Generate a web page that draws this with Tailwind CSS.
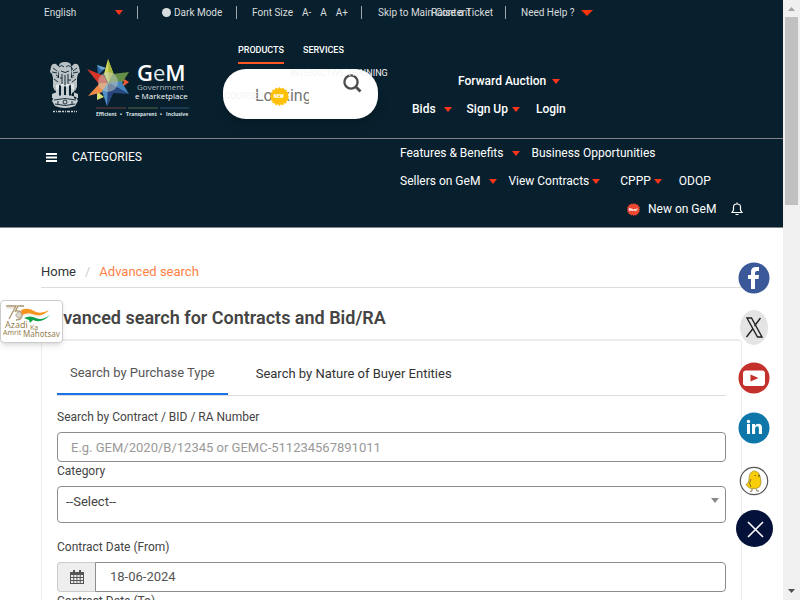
<!DOCTYPE html>
<html lang="en">
<head>
<meta charset="utf-8">
<meta name="viewport" content="width=device-width, initial-scale=1">
<title>Advanced search | GeM</title>
<script src="https://cdn.jsdelivr.net/npm/@tailwindcss/browser@4"></script>
</head>
<body class="flex h-screen overflow-hidden bg-white font-[Roboto,sans-serif] text-[#444]">
<svg class="hidden">
  <symbol id="caret" viewBox="0 0 8 5" preserveAspectRatio="none"><path d="M0 0h8L4 5z" fill="#f8341b"/></symbol>
  <symbol id="burst" viewBox="0 0 20 20"><path d="M10 0l1.700 1.900L14 .6l.9 2.300 2.500-.1.100 2.500 2.300.9-1 2.200L20 10l-1.300 1.600 1 2.300-2.300.9-.1 2.500-2.500-.1-.9 2.300-2.200-1.300L10 20l-1.700-1.800-2.300 1.200-.9-2.300-2.500.1-.1-2.500-2.200-.9 1-2.200L0 10l1.300-1.700-1-2.200 2.200-.9.100-2.500 2.500.1L6 .6l2.300 1.300z"/></symbol>
</svg>

<div class="relative min-w-0 flex-1 overflow-hidden">
  <header class="border-b border-[#808488] bg-[#08202d] text-white">
    <div class="flex h-[25px] items-center pl-11 text-[10px] text-[#d8dcde]">
      <div class="flex h-[13px] w-[94px] items-center border-r border-[#a0a6aa]">
        <select aria-label="Language" class="w-[71px] appearance-none bg-transparent text-[10px]"><option>English</option></select>
        <svg class="h-[5px] w-2"><use href="#caret"/></svg>
      </div>
      <button class="flex h-[13px] w-[99px] items-center gap-[3px] border-r border-[#a0a6aa] pl-6"><span class="size-[9px] rounded-full bg-[#d8dcde]"></span>Dark Mode</button>
      <div class="flex h-[13px] w-[125px] items-center gap-[9px] border-r border-[#a0a6aa] pl-[15px]">
        <span>Font Size</span><button>A-</button><button>A</button><button>A+</button>
      </div>
      <div class="relative flex h-[13px] w-36 items-center border-r border-[#a0a6aa] pl-4">
        <a href="#main">Skip to Main Content</a>
        <a href="#ticket" class="absolute right-3">Raise a Ticket</a>
      </div>
      <button class="flex items-center gap-[6px] pl-[15px]">Need Help ?<svg class="h-[6px] w-3" viewBox="0 0 12 6"><path d="M0 0h12L6 6z" fill="#f8340b"/></svg></button>
    </div>

    <div class="flex h-[114px] border-b border-[#808488] pl-12">
      <a href="#home" class="mt-[33px] block h-[62px] w-[142px]" aria-label="Government e Marketplace home">
        <svg viewBox="0 0 142 62" class="h-[62px] w-[142px]">
          <g fill="#e8ecee">
            <path d="M11 8q0-4 6-4t6 4l2 3-3 4h-10l-3-4zM3 9q1-4 5-3l3 3-1 10-5 1-1-4-2-2zM31 9q-1-4-5-3l-3 3 1 10 5 1 1-4 2-2zM11 14h12v13q-6 3-12 0zM5 18l6 2v10l-4 3-2-4zM29 18l-6 2v10l4 3 2-4z" opacity=".8"/>
            <path d="M8 27l3-1v14H8zM13 26h3v13h-3zM18 26h3v13h-3zM23 26h3v14h-3zM4 36l5-2 2 3-4 4-3-1zM30 36l-5-2-2 3 4 4 3-1zM6 39q11-4 22 0l2 4-3 5q-10 4-20 0l-3-5z" opacity=".85"/>
          </g>
          <g stroke="#08202d" fill="none" stroke-width=".9">
            <path d="M11 9q3-3 5 0M18 9q2-3 5 0M13 13q4 3 8 0M5 10l4 3M29 10l-4 3M4 14l5 1M30 14l-5 1M14 16v10M17 17v10M20 16v10M6 21l4 3M28 21l-4 3M12 20h2M20 22h3M8 17l3 2M26 17l-3 2M6 42q11-3 22 0M7 46q10 3 20 0M10 43v3M24 43v3"/>
            <circle cx="17" cy="44" r="2"/>
          </g>
          <path d="M5 53.500h24" stroke="#c8ced0" stroke-width="1.500" stroke-dasharray="2 1 1 1 3 1"/>
          <path d="M49 7l9 3-8 7z" fill="#2e6aa8"/><path d="M49 7l9 3-4 2z" fill="#74a9cf"/>
          <path d="M73 19l8 5-8 6 3-6z" fill="#e95a35"/><path d="M49 42v-9l7 6z" fill="#d9de74"/>
          <path d="M60 1l6 16-5 10-5-11z" fill="#d3d85b"/><path d="M60 1l6 16-5 10z" fill="#a9b83c"/>
          <path d="M81 14L65 16l-5 9 14 0z" fill="#648f45"/>
          <path d="M39 11l17 7 4 8-9 0z" fill="#d73529"/>
          <path d="M40 38l12-13 9 0-6 9z" fill="#f28a47"/>
          <path d="M59 48l-5-15 6-8 6 8z" fill="#5291c8"/><path d="M59 48l1-23 6 8z" fill="#27447c"/>
          <path d="M81 36L61 25l12-2z" fill="#4685bd"/><path d="M81 36l-15-1-5-10z" fill="#294b82"/>
          <circle cx="60" cy="24" r="10" fill="#c8d0c8" opacity=".5"/>
          <g font-family="Open Sans, Noto Sans, sans-serif" fill="#fff">
            <text x="89" y="23" font-size="22" font-weight="600">G<tspan font-weight="400" fill="#dfe5e8">e</tspan>M</text>
            <text x="89" y="32" font-size="8" fill="#aeb9bf">Government</text>
            <text x="87" y="41" font-size="8" font-weight="500">e Marketplace</text>
            <g font-size="5" font-weight="700" fill="#dce2e5"><text x="48" y="58">Efficient</text><text x="72" y="58">•</text><text x="78" y="58">Transparent</text><text x="112" y="58">•</text><text x="118" y="58">Inclusive</text></g>
          </g>
          <path d="M48 50h30" stroke="#6d403e"/><path d="M80 50h30" stroke="#536447"/><path d="M112 50h29" stroke="#2d5370"/>
        </svg>
      </a>

      <div class="relative ml-[33px] w-[155px] pt-[17px]">
        <nav class="flex gap-[19px] pl-[15px] text-[9px] leading-4 font-medium">
          <a href="#products" class="h-[22px] border-b-2 border-[#ff5722]">PRODUCTS</a>
          <a href="#services">SERVICES</a>
        </nav>
        <form class="mt-[5px] flex h-[50px] items-start rounded-[23px] bg-white pt-1 pl-8 shadow-lg">
          <input type="text" aria-label="Search" placeholder="Looking for products" class="mt-2 h-7 w-[54px] bg-transparent text-[16px] text-[#555] outline-none placeholder:text-[#757575]">
          <button type="button" aria-label="Search" class="ml-[33px]"><svg class="size-[20px]" viewBox="0 0 20 20" fill="none" stroke="#4d4d4d" stroke-width="2.300"><circle cx="9" cy="9" r="6.600"/><path d="M13.500 13.500l5 5" stroke-width="2.800"/></svg></button>
        </form>
        <a href="#training" class="absolute top-10 left-[67px] text-[9px] leading-4 whitespace-nowrap text-[#f5f5f5]">INTERACTIVE TRAINING</a>
        <a href="#courses" class="absolute top-[63px] left-px text-[9px] leading-4 text-[#f5f5f5]">COURSES</a>
        <svg class="absolute top-[62px] left-[47px] size-[19px]" viewBox="0 0 20 20"><use href="#burst" fill="#ffc107"/><text x="4" y="12" font-size="5" font-weight="900" fill="#fff" font-family="Roboto">NEW</text></svg>
      </div>

      <nav class="ml-[34px] pt-[42px] text-[12px] leading-7 font-medium">
        <div class="flex items-center pl-[46px]"><a href="#auction">Forward Auction</a><svg class="ml-[6px] h-[5px] w-2"><use href="#caret"/></svg></div>
        <div class="flex items-center">
          <a href="#bids">Bids</a><svg class="ml-2 h-[5px] w-2"><use href="#caret"/></svg>
          <a href="#signup" class="ml-[15px]">Sign Up</a><svg class="ml-[4px] h-[5px] w-2"><use href="#caret"/></svg>
          <a href="#login" class="ml-4">Login</a>
        </div>
      </nav>
    </div>

    <div class="flex h-[88px]">
      <button class="flex h-9 w-[354px] shrink-0 items-center gap-[15px] pl-[46px] text-[12px]">
        <svg class="h-[9px] w-[11px]" viewBox="0 0 11 9"><path d="M0 1h11M0 4.500h11M0 8h11" stroke="#fff" stroke-width="2"/></svg>CATEGORIES
      </button>
      <nav class="ml-[46px] text-[12px] leading-7">
        <div class="flex items-center"><a href="#features">Features &amp; Benefits</a><svg class="ml-[9px] h-[5px] w-2"><use href="#caret"/></svg><a href="#business" class="ml-[11px]">Business Opportunities</a></div>
        <div class="flex items-center"><a href="#sellers">Sellers on GeM</a><svg class="ml-[9px] h-[5px] w-2"><use href="#caret"/></svg><a href="#contracts" class="ml-[11px]">View Contracts</a><svg class="ml-[3px] h-[5px] w-2"><use href="#caret"/></svg><a href="#cppp" class="ml-5">CPPP</a><svg class="ml-[3px] h-[5px] w-2"><use href="#caret"/></svg><a href="#odop" class="ml-[17px]">ODOP</a></div>
        <div class="flex items-center pl-[227px]">
          <svg class="mr-2 size-[13px]" viewBox="0 0 20 20"><use href="#burst" fill="#ef4832"/><text x="3" y="13" font-size="6" font-weight="900" fill="#fff" font-family="Roboto">New!</text></svg>
          <a href="#new">New on GeM</a>
          <button aria-label="Notifications" class="ml-[15px]"><svg class="h-[14px] w-3" viewBox="0 0 12 14" fill="none" stroke="#fff" stroke-width="1.200"><path d="M1 10.500L2.500 8V5q0-3 3.500-3t3.500 3v3l1.500 2.500zM6 2V.5M4.500 12.500h3"/></svg></button>
        </div>
      </nav>
    </div>
  </header>

  <main id="main" class="pt-[34px] pr-[41px] pl-[41px]">
    <nav class="flex h-[26px] gap-[9px] border-b border-[#ddd] text-[13px] leading-5" aria-label="Breadcrumb">
      <a href="#home" class="text-[#333]">Home</a><span class="text-[#ccc]">/</span><a href="#search" class="text-[#ff7f45]">Advanced search</a>
    </nav>
    <h1 class="mt-[18px] h-[33px] text-[18px] leading-6 font-semibold">Advanced search for Contracts and Bid/RA</h1>
    <section class="rounded border border-t-2 border-[#ececec] px-[15px] pt-3">
      <div role="tablist" class="flex border-b border-[#ddd] text-[13px]">
        <button role="tab" aria-selected="true" class="h-[42px] border-b-2 border-[#1a73e8] px-[13px] text-[#555]">Search by Purchase Type</button>
        <button role="tab" aria-selected="false" class="ml-[15px] px-[13px] text-[#333]">Search by Nature of Buyer Entities</button>
      </div>
      <form class="flex flex-col text-[12px] leading-5">
        <label for="number" class="mt-[11px]">Search by Contract / BID / RA Number</label>
        <input id="number" placeholder="E.g. GEM/2020/B/12345 or GEMC-511234567891011" class="mt-[5px] h-[30px] rounded border border-[#8d8d8d] px-[13px] text-[13px] placeholder:text-[#999]">
        <label for="category" class="-mt-px">Category</label>
        <div class="relative mt-[5px] flex">
          <select id="category" class="h-[37px] flex-1 appearance-none rounded border border-[#8d8d8d] px-2 pb-[6px] text-[13px]"><option>--Select--</option></select>
          <svg class="pointer-events-none absolute top-3 right-[7px] h-[5px] w-2" viewBox="0 0 8 5"><path d="M0 0h8L4 5z" fill="#888"/></svg>
        </div>
        <label for="from" class="mt-[14px]">Contract Date (From)</label>
        <div class="mt-[5px] flex h-[30px]">
          <span class="flex w-[38px] items-center justify-center rounded-l border border-r-0 border-[#ccc] bg-[#eee]">
            <svg class="h-[14px] w-[14px]" viewBox="0 0 14 14"><path d="M0 2h3V0h2v2h4V0h2v2h3v12H0z" fill="#555"/><path d="M1 5h2.300v2H1zM4.200 5h2.300v2H4.200zM7.400 5h2.300v2H7.400zM10.700 5H13v2h-2.300zM1 8h2.300v2H1zM4.200 8h2.300v2H4.200zM7.400 8h2.300v2H7.400zM10.700 8H13v2h-2.300zM1 11h2.300v2H1zM4.200 11h2.300v2H4.200zM7.400 11h2.300v2H7.400zM10.700 11H13v2h-2.300z" fill="#eee"/></svg>
          </span>
          <input id="from" value="18-06-2024" class="min-w-0 flex-1 rounded-r border border-[#8d8d8d] px-[14px] text-[13px] text-[#555]">
        </div>
        <label for="to" class="-mt-px">Contract Date (To)</label>
        <input id="to" class="mt-[5px] h-[30px] rounded border border-[#8d8d8d]">
      </form>
    </section>
  </main>

  <a href="#azadi" aria-label="Azadi Ka Amrit Mahotsav" class="absolute top-[300px] left-0 block h-[43px] w-[63px] rounded border border-[#ccc] bg-white shadow-md">
    <svg viewBox="0 0 61 41" class="h-[41px] w-[61px]">
      <path d="M5 5h10L8 18M23 5h-6l-3 6M14 10q7-1 7 4t-6 5" fill="none" stroke="#aa9670" stroke-width="1.300"/>
      <path d="M6 7h8" stroke="#c7b89a" stroke-width=".7"/>
      <circle cx="18" cy="14" r="3" fill="#ddd6c8" stroke="#9c927f" stroke-dasharray="1 .6"/>
      <path d="M20 9q7-3 13 1t15-1q-6 7-14 5-7-3-13 0z" fill="#f7941d"/>
      <path d="M22 14q6-3 12 0t14-3q-6 6-14 5-6-2-12 0z" fill="#f2f2ee"/>
      <path d="M23 17q6-3 12 0t14-3q-6 7-14 6l-3-1-3 3-1-3z" fill="#0fa04b"/>
      <g fill="#96804f" font-family="Noto Sans, sans-serif"><text x="4" y="27" font-size="9">Azadi</text><text x="29" y="29" font-size="7">Ka</text><text x="2" y="34" font-size="7">Amrit</text><text x="22" y="36" font-size="8">Mahotsav</text></g>
    </svg>
  </a>

  <aside class="absolute top-[262px] right-[10px] flex w-[38px] flex-col items-center" aria-label="Social links">
    <a href="#facebook" aria-label="Facebook"><svg class="size-8" viewBox="0 0 32 32"><circle cx="16" cy="16" r="15.500" fill="#3b5998"/><path d="M13 27V17h-3v-4h3v-3q0-5 5-5h3v4h-2q-2 0-2 2v2h4l-.5 4H17v10z" fill="#fff"/></svg></a>
    <a href="#x" aria-label="X" class="mt-4"><svg class="h-[35px] w-7" viewBox="0 0 28 35"><ellipse cx="14" cy="17.500" rx="14" ry="17.500" fill="#e4e4e4"/><path d="M7 8h4.500L22 27h-4.500zM20.500 8l-6 8M13 18.500L6.500 27" fill="none" stroke="#222" stroke-width="1.400"/></svg></a>
    <a href="#youtube" aria-label="YouTube" class="mt-[17px]"><svg class="size-8" viewBox="0 0 32 32"><circle cx="16" cy="16" r="15.500" fill="#c4302b"/><rect x="5" y="8.500" width="22" height="15.500" rx="3" fill="#fff"/><path d="M12.500 12.500l8 3.500-8 3.500z" fill="#c4302b"/></svg></a>
    <a href="#linkedin" aria-label="LinkedIn" class="mt-[18px]"><svg class="size-8" viewBox="0 0 32 32"><circle cx="16" cy="16" r="15.500" fill="#0e76a8"/><g fill="#fff"><path d="M9 12h3v10H9zM14 12h3v1.500q1-1.800 3.300-1.800 3.700 0 3.700 4.300v6h-3.100v-5.500q0-2.200-1.700-2.200-2.100 0-2.100 2.400V22H14z"/><circle cx="10.500" cy="9.500" r="1.700"/></g></svg></a>
    <a href="#koo" aria-label="Koo" class="mt-[22px]"><svg class="size-[30px]" viewBox="0 0 30 30"><circle cx="15" cy="15" r="13.700" fill="#fff" stroke="#555" stroke-width="1.200"/><path d="M14 5.500q1-2 2 0 4 0 5 5l1 5q0 7-6 7-6 1-9-4 3-1 3-5 0-7 4-8z" fill="#facd09" stroke="#9a8424" stroke-width=".7"/><path d="M12 13q-3 5 0 8M15.500 9.500h1.500M19 9l2 .8-2 .7M13 23v2l-2 .5M17 23l1 2h2" fill="none" stroke="#675a22" stroke-width=".8"/></svg></a>
    <button aria-label="Close social links" class="mt-[14px]"><svg class="size-[37px]" viewBox="0 0 37 37"><circle cx="18.500" cy="18.500" r="18.500" fill="#041139"/><path d="M12 12l15 15M27 12L12 27" stroke="#fff" stroke-width="1.600"/></svg></button>
  </aside>
</div>

<div class="flex w-[17px] shrink-0 flex-col items-center bg-[#f0f0f0]" aria-hidden="true">
  <svg class="h-[17px] w-[17px]" viewBox="0 0 17 17"><path d="M5 11h7L8.500 7z" fill="#a3a3a3"/></svg>
  <div class="h-[188px] w-[13px] bg-[#c1c1c1]"></div>
  <svg class="mt-auto h-[17px] w-[17px]" viewBox="0 0 17 17"><path d="M5 6h7l-3.500 4z" fill="#505050"/></svg>
</div>
</body>
</html>
